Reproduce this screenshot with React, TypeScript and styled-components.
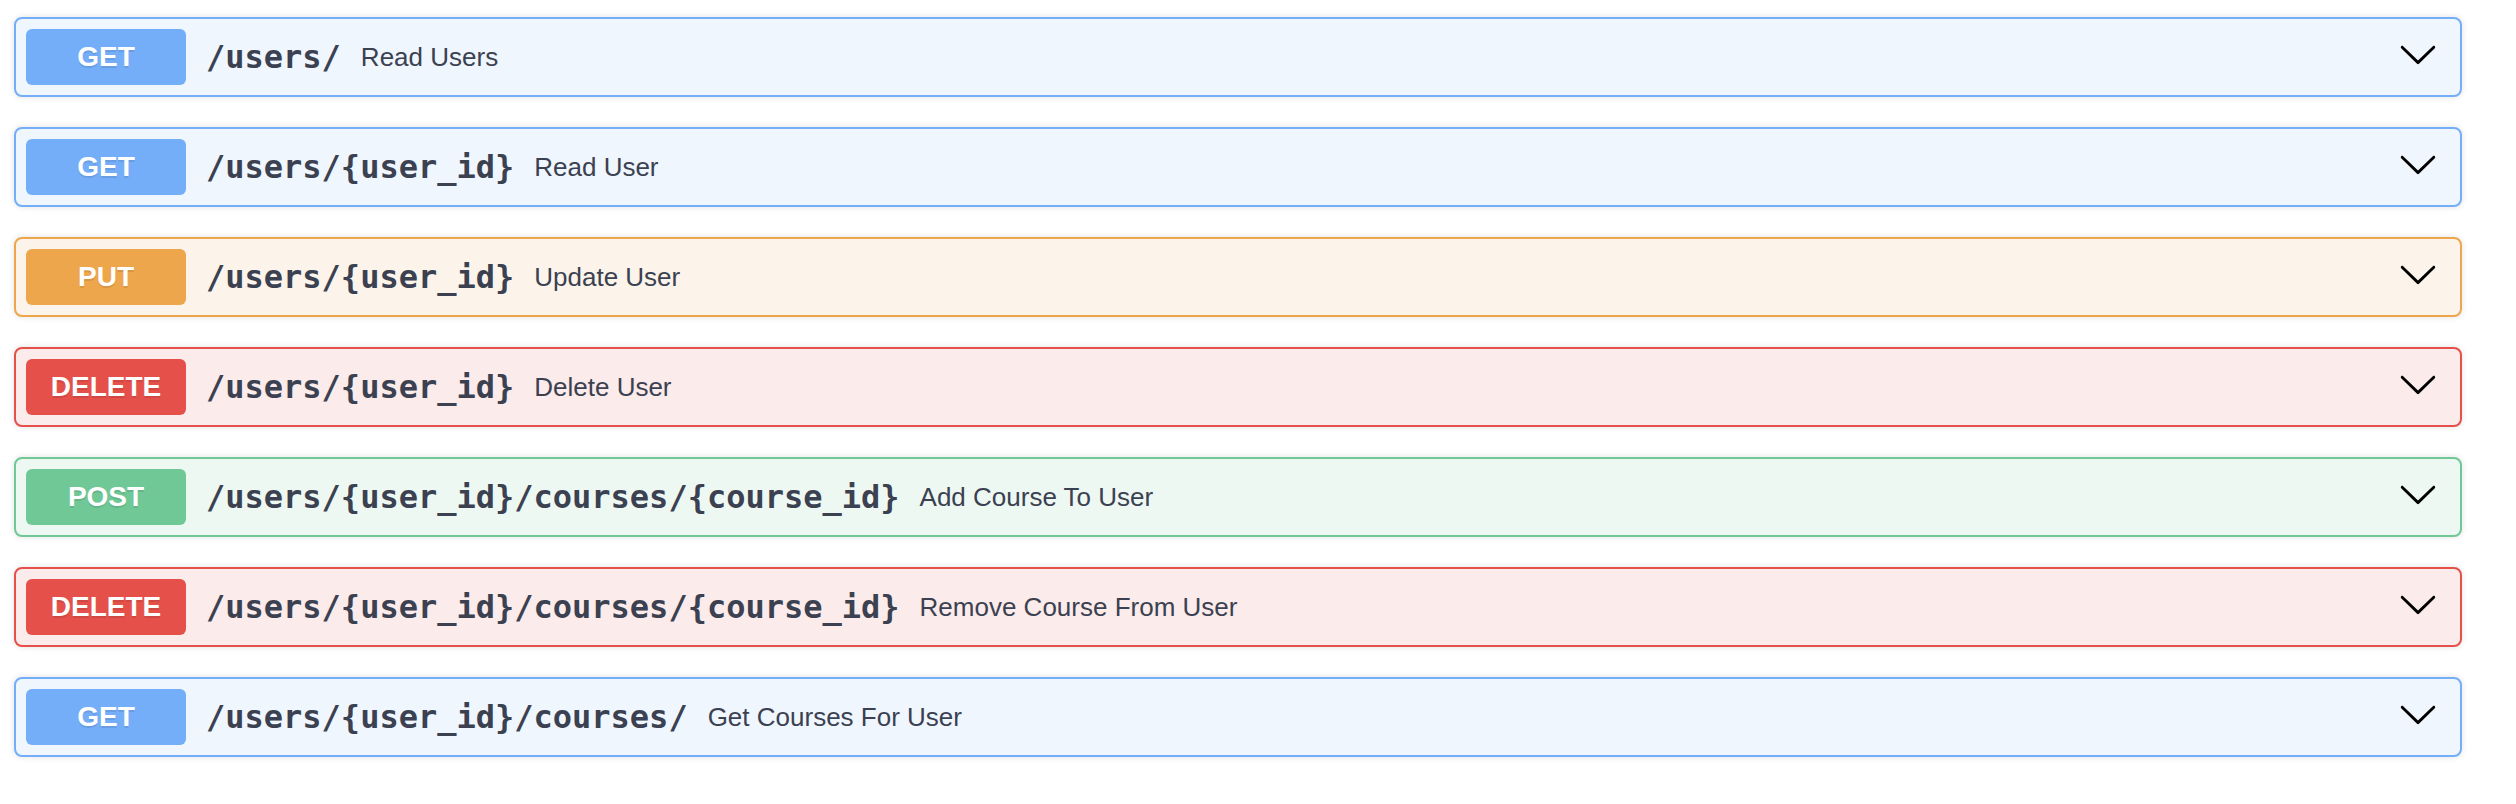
import React from "react";
import styled, { createGlobalStyle } from "styled-components";

const GlobalStyle = createGlobalStyle`
  html, body { margin: 0; padding: 0; background: #ffffff; }
  body { font-family: "Liberation Sans", Arial, sans-serif; }
`;

type Method = "get" | "put" | "post" | "delete";

const palette: Record<Method, { main: string; bg: string }> = {
  get: { main: "#74aef9", bg: "#eff6fe" },
  put: { main: "#eea64c", bg: "#fcf4eb" },
  post: { main: "#6fc895", bg: "#eef8f2" },
  delete: { main: "#e5504a", bg: "#fbebea" },
};

const Page = styled.div`
  padding: 17px 54px 40px 14px;
`;

const List = styled.div`
  display: flex;
  flex-direction: column;
  gap: 30px;
`;

const Block = styled.div<{ $method: Method }>`
  display: flex;
  align-items: center;
  padding: 10px;
  border: 2px solid ${(p) => palette[p.$method].main};
  background: ${(p) => palette[p.$method].bg};
  border-radius: 8px;
  box-shadow: 0 0 6px rgba(0, 0, 0, 0.12);
`;

const Badge = styled.span<{ $method: Method }>`
  min-width: 160px;
  padding: 12px 0;
  box-sizing: border-box;
  text-align: center;
  font-family: "Liberation Sans", Arial, sans-serif;
  font-size: 28px;
  line-height: 32px;
  font-weight: 700;
  color: #ffffff;
  background: ${(p) => palette[p.$method].main};
  border-radius: 6px;
  text-shadow: 0 2px 0 rgba(0, 0, 0, 0.1);
`;

const Path = styled.span`
  padding: 0 20px;
  font-family: "DejaVu Sans Mono", "Liberation Mono", monospace;
  font-size: 32px;
  font-weight: 700;
  color: #3b4151;
  white-space: nowrap;
`;

const Description = styled.span`
  flex: 1;
  font-family: "Liberation Sans", Arial, sans-serif;
  font-size: 26px;
  color: #3b4151;
`;

const Chevron = styled.svg`
  width: 40px;
  height: 40px;
  margin-right: 12px;
  margin-bottom: 7px;
  flex-shrink: 0;
`;

const ops: { method: Method; path: string; desc: string }[] = [
  { method: "get", path: "/users/", desc: "Read Users" },
  { method: "get", path: "/users/{user_id}", desc: "Read User" },
  { method: "put", path: "/users/{user_id}", desc: "Update User" },
  { method: "delete", path: "/users/{user_id}", desc: "Delete User" },
  { method: "post", path: "/users/{user_id}/courses/{course_id}", desc: "Add Course To User" },
  { method: "delete", path: "/users/{user_id}/courses/{course_id}", desc: "Remove Course From User" },
  { method: "get", path: "/users/{user_id}/courses/", desc: "Get Courses For User" },
];

export default function App() {
  return (
    <Page>
      <GlobalStyle />
      <List>
        {ops.map((op, i) => (
          <Block key={i} $method={op.method}>
            <Badge $method={op.method}>{op.method.toUpperCase()}</Badge>
            <Path>{op.path}</Path>
            <Description>{op.desc}</Description>
            <Chevron viewBox="0 0 20 20" aria-hidden="true">
              <path
                fill="#000"
                d="M17.418 6.109c.272-.268.709-.268.979 0s.271.701 0 .969l-7.908 7.83c-.27.268-.707.268-.979 0l-7.908-7.83c-.27-.268-.27-.701 0-.969.271-.268.709-.268.979 0L10 13.25l7.418-7.141z"
              />
            </Chevron>
          </Block>
        ))}
      </List>
    </Page>
  );
}
